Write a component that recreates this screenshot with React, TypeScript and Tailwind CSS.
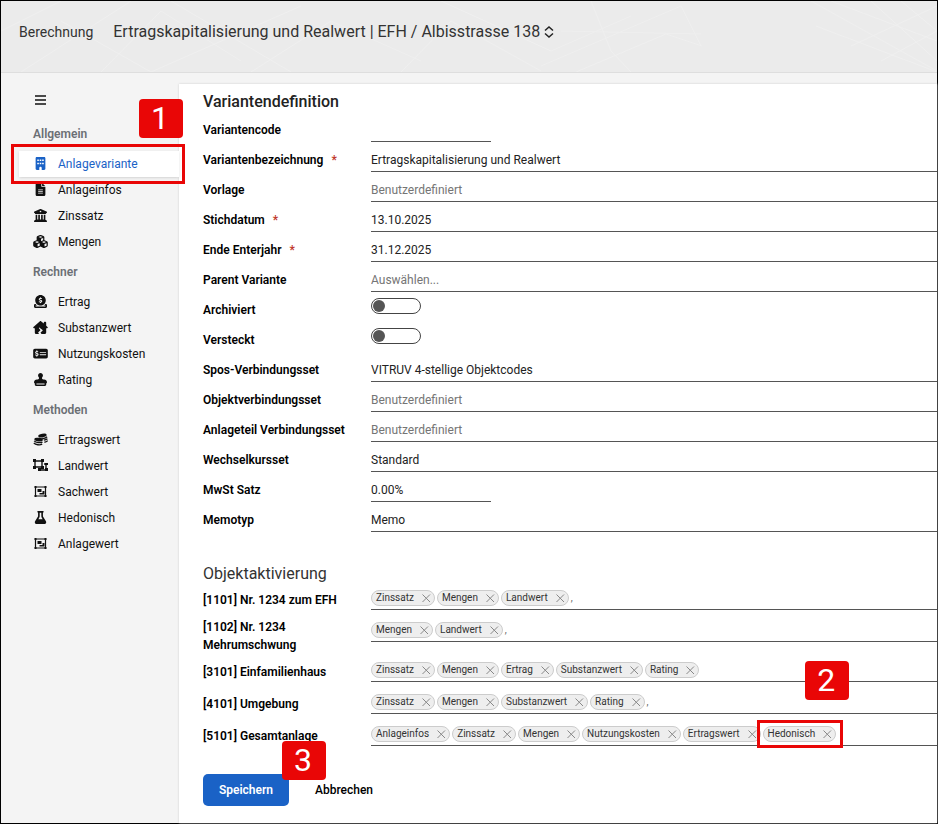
import React, { useState } from "react";
import {
  FaBuilding,
  FaBuildingColumns,
  FaCircleDollarToSlot,
  FaCubes,
  FaFileLines,
  FaFlask,
  FaHouseChimneyCrack,
  FaMoneyCheckDollar,
  FaStamp,
} from "react-icons/fa6";

type IconProps = { className?: string };
type NavItem = {
  label: string;
  icon: React.ComponentType<IconProps>;
  active?: boolean;
};
type NavGroup = { title: string; items: NavItem[] };

const CoinsIcon = ({ className }: IconProps) => (
  <svg className={className} viewBox="0 0 14 13" fill="currentColor" aria-hidden="true">
    <g transform="rotate(-10 9 3)">
      <ellipse cx="9" cy="2.6" rx="4.3" ry="1.8" />
      <path
        d="M5 4.6c2 1.5 6.4 1.5 8.4 0M9.6 7.4c1.5 0 2.8-.3 3.8-.9M9.8 9.5c1.4 0 2.6-.4 3.6-1"
        fill="none"
        stroke="currentColor"
        strokeWidth="1.3"
      />
    </g>
    <g transform="rotate(8 5 7)">
      <ellipse cx="5" cy="6.6" rx="4.3" ry="1.8" />
      <path
        d="M.8 8.5c2 1.5 6.4 1.5 8.4 0M.8 10.6c2 1.6 6.4 1.6 8.4 0"
        fill="none"
        stroke="currentColor"
        strokeWidth="1.3"
      />
    </g>
  </svg>
);

const UngroupIcon = ({ className }: IconProps) => (
  <svg className={className} viewBox="0 0 15 13" fill="currentColor" aria-hidden="true">
    <path
      d="M2 2h7v6H2zM11 5h2v6H7V9"
      fill="none"
      stroke="currentColor"
      strokeWidth="1.4"
    />
    <path d="M0 0h3v3H0zM8 0h3v3H8zM0 7h3v3H0zM8 7h3v3H8zM12 4h3v2h-3zM12 9h3v3h-3zM5 9h3v3H5z" />
  </svg>
);

const GroupIcon = ({ className }: IconProps) => (
  <svg className={className} viewBox="0 0 14 13" fill="currentColor" aria-hidden="true">
    <path d="M2 2h10v9H2z" fill="none" stroke="currentColor" strokeWidth="1.2" />
    <path d="M1 1h2v2H1zM11 1h2v2h-2zM1 10h2v2H1zM11 10h2v2h-2zM4 4h4v3H4zM9 6h2v3.500H6V8h3z" />
  </svg>
);

const navGroups: NavGroup[] = [
  {
    title: "Allgemein",
    items: [
      { label: "Anlagevariante", icon: FaBuilding, active: true },
      { label: "Anlageinfos", icon: FaFileLines },
      { label: "Zinssatz", icon: FaBuildingColumns },
      { label: "Mengen", icon: FaCubes },
    ],
  },
  {
    title: "Rechner",
    items: [
      { label: "Ertrag", icon: FaCircleDollarToSlot },
      { label: "Substanzwert", icon: FaHouseChimneyCrack },
      { label: "Nutzungskosten", icon: FaMoneyCheckDollar },
      { label: "Rating", icon: FaStamp },
    ],
  },
  {
    title: "Methoden",
    items: [
      { label: "Ertragswert", icon: CoinsIcon },
      { label: "Landwert", icon: UngroupIcon },
      { label: "Sachwert", icon: GroupIcon },
      { label: "Hedonisch", icon: FaFlask },
      { label: "Anlagewert", icon: GroupIcon },
    ],
  },
];

type FieldDef = {
  id: string;
  label: string;
  value?: string;
  placeholder?: string;
  required?: boolean;
  short?: boolean;
  toggle?: boolean;
};

const fields: FieldDef[] = [
  { id: "code", label: "Variantencode", short: true },
  {
    id: "bezeichnung",
    label: "Variantenbezeichnung",
    value: "Ertragskapitalisierung und Realwert",
    required: true,
  },
  { id: "vorlage", label: "Vorlage", placeholder: "Benutzerdefiniert" },
  { id: "stichdatum", label: "Stichdatum", value: "13.10.2025", required: true },
  { id: "ende", label: "Ende Enterjahr", value: "31.12.2025", required: true },
  { id: "parent", label: "Parent Variante", placeholder: "Auswählen..." },
  { id: "archiviert", label: "Archiviert", toggle: true },
  { id: "versteckt", label: "Versteckt", toggle: true },
  { id: "spos", label: "Spos-Verbindungsset", value: "VITRUV 4-stellige Objektcodes" },
  { id: "objekt", label: "Objektverbindungsset", placeholder: "Benutzerdefiniert" },
  { id: "anlageteil", label: "Anlageteil Verbindungsset", placeholder: "Benutzerdefiniert" },
  { id: "wechselkurs", label: "Wechselkursset", value: "Standard" },
  { id: "mwst", label: "MwSt Satz", value: "0.00%", short: true },
  { id: "memotyp", label: "Memotyp", value: "Memo" },
];

type ObjectDef = { label: string; tags: string[]; more?: boolean };

const objects: ObjectDef[] = [
  { label: "[1101] Nr. 1234 zum EFH", tags: ["Zinssatz", "Mengen", "Landwert"], more: true },
  { label: "[1102] Nr. 1234 Mehrumschwung", tags: ["Mengen", "Landwert"], more: true },
  {
    label: "[3101] Einfamilienhaus",
    tags: ["Zinssatz", "Mengen", "Ertrag", "Substanzwert", "Rating"],
  },
  {
    label: "[4101] Umgebung",
    tags: ["Zinssatz", "Mengen", "Substanzwert", "Rating"],
    more: true,
  },
  {
    label: "[5101] Gesamtanlage",
    tags: ["Anlageinfos", "Zinssatz", "Mengen", "Nutzungskosten", "Ertragswert", "Hedonisch"],
  },
];

const StepBadge = ({ step, className }: { step: number; className: string }) => (
  <span
    className={`absolute z-20 flex h-[39px] w-11 items-center justify-center rounded bg-[#e90606] pr-[2px] pb-[2px] text-[32px] leading-none font-normal text-white ${className}`}>
    {step}
  </span>
);

const HeaderPattern = () => (
  <svg
    className="absolute inset-0 h-full w-full"
    viewBox="0 0 936 71"
    preserveAspectRatio="none"
    fill="none"
    stroke="#efefef"
    aria-hidden="true">
    <path d="M0 30 60 0M20 71 130 0M60 20l90 51M100 71 160 10l80 50M150 71 300 5M170 0l120 71M250 71 330 20l90 40" />
    <path d="M400 71 450 20l90 50M440 0l110 50 80-35M540 65 680 5M560 30l140 3M575 71l90-38 36 12M680 5l20 40M590 0l20 50 20 21" />
    <path d="M810 0l126 70M830 0l106 40M815 25l121 46M850 45l86-40M870 0l66 60M900 0l36 30M880 60l56-30" />
  </svg>
);

const Sidebar = () => (
  <nav className="w-[178px] shrink-0 pl-[18px]">
    <button aria-label="Menü" className="mt-[9px] mb-[10px] ml-4 flex h-[14px] items-center">
      <svg width="11" height="10" viewBox="0 0 11 10" stroke="#111" strokeWidth="1.5">
        <path d="M0 1h11M0 5h11M0 9h11" />
      </svg>
    </button>
    {navGroups.map((group) => (
      <div key={group.title}>
        <h3 className="flex h-[34px] items-center pl-[14px] text-xs font-semibold text-[#6b6f74]">
          {group.title}
        </h3>
        <ul>
          {group.items.map(({ label, icon: Icon, active }) => (
            <li key={label} className="relative">
              <a
                href="#"
                className={`flex h-[26px] items-center text-xs ${
                  active ? "bg-white text-[#1a62c6] shadow-sm" : "text-[#111]"
                }`}>
                <span className="flex w-[39px] pb-px pl-[14px]">
                  <Icon className="h-[13px] w-[15px]" />
                </span>
                {label}
              </a>
              {active && (
                <>
                  <span className="absolute -inset-y-[7px] -right-[6px] -left-2 z-10 border-[3px] border-[#e90606]" />
                  <StepBadge step={1} className="-top-[52px] -right-1" />
                </>
              )}
            </li>
          ))}
        </ul>
      </div>
    ))}
  </nav>
);

const Toggle = ({ id }: { id: string }) => (
  <input
    id={id}
    type="checkbox"
    role="switch"
    className="h-4 w-[50px] appearance-none rounded-full border border-[#444] bg-white before:m-px before:block before:size-3 before:rounded-full before:bg-[#555] checked:before:ml-[35px]"
  />
);

const FieldRow = ({ field }: { field: FieldDef }) => (
  <div className="flex h-[30px] pt-[6px]">
    <label
      htmlFor={field.id}
      className="flex w-[168px] shrink-0 items-center text-xs font-semibold text-black">
      {field.label}
      {field.required && <span className="ml-2 text-[#c0392b]">*</span>}
    </label>
    {field.toggle ? (
      <Toggle id={field.id} />
    ) : (
      <input
        id={field.id}
        type="text"
        defaultValue={field.value}
        placeholder={field.placeholder}
        className={`h-6 border-b border-[#555] text-xs text-[#222] outline-none placeholder:text-[#757575] ${
          field.short ? "w-[120px]" : "min-w-0 flex-1"
        }`}
      />
    )}
  </div>
);

const Tag = ({ label, onRemove }: { label: string; onRemove: () => void }) => (
  <span className="relative flex h-4 items-center gap-2 rounded-full border border-[#ccc] bg-[#eee] pr-[3px] pl-1 text-[10px] leading-[14px] text-[#333]">
    {label}
    <button aria-label={`${label} entfernen`} onClick={onRemove}>
      <svg width="9" height="9" viewBox="0 0 9 9" stroke="#888">
        <path d="M.5.5l7.500 7.500M8 .5l-7.500 7.500" />
      </svg>
    </button>
    {label === "Hedonisch" && (
      <>
        <span className="pointer-events-none absolute -inset-y-[7px] -right-2 -left-[7px] border-[3px] border-[#e90606]" />
        <StepBadge step={2} className="-top-[66px] -right-[14px]" />
      </>
    )}
  </span>
);

const ObjectRow = ({ label, tags, more }: ObjectDef) => {
  const [items, setItems] = useState(tags);

  return (
    <div className="flex min-h-8">
      <div className="flex w-[168px] shrink-0 items-center py-[2px] pr-4 text-xs leading-[18px] font-semibold text-black">
        {label}
      </div>
      <div className="mt-[6px] flex h-5 min-w-0 flex-1 gap-[2px] border-b border-[#555]">
        {items.map((tag) => (
          <Tag
            key={tag}
            label={tag}
            onRemove={() => setItems(items.filter((item) => item !== tag))}
          />
        ))}
        {more && <span className="text-[10px] leading-4 text-[#666]">,</span>}
      </div>
    </div>
  );
};

const App = () => {
  return (
    <div className="flex min-h-screen flex-col border border-black bg-[#f4f4f4] font-[Roboto,sans-serif]">
      <header className="relative flex h-[72px] items-start border-b border-[#dedede] bg-[#ebebeb] text-[#333]">
        <HeaderPattern />
        <div className="relative flex items-baseline gap-5 pt-[19px] pl-[18px]">
          <span className="text-sm leading-6">Berechnung</span>
          <h1 className="flex items-center gap-1 text-base leading-6">
            Ertragskapitalisierung und Realwert | EFH / Albisstrasse 138
            <svg
              width="10"
              height="12"
              viewBox="0 0 10 12"
              fill="none"
              stroke="#222"
              strokeWidth="1.5"
              aria-hidden="true">
              <path d="M1 4.5 5 1l4 3.5M1 7.5 5 11l4-3.5" />
            </svg>
          </h1>
        </div>
      </header>
      <div className="flex flex-1 pt-[11px]">
        <Sidebar />
        <main className="min-w-0 flex-1 bg-white pt-[6px] pb-[17px] pl-6 shadow-[0_0_2px_#ccc]">
          <form onSubmit={(e) => e.preventDefault()}>
            <h2 className="pt-[2px] text-base leading-5 font-medium text-[#222]">
              Variantendefinition
            </h2>
            {fields.map((field) => (
              <FieldRow key={field.id} field={field} />
            ))}
            <h2 className="mt-[30px] pt-[2px] text-base leading-5 text-[#333]">
              Objektaktivierung
            </h2>
            {objects.map((object) => (
              <ObjectRow key={object.label} {...object} />
            ))}
            <div className="mt-[22px] flex h-8 items-center">
              <div className="relative">
                <button
                  type="submit"
                  className="h-8 w-[86px] rounded-[5px] bg-[#1a62c6] text-xs font-semibold text-white">
                  Speichern
                </button>
                <StepBadge step={3} className="-top-[33px] -right-[37px]" />
              </div>
              <button type="button" className="ml-[26px] text-xs font-medium text-black">
                Abbrechen
              </button>
            </div>
          </form>
        </main>
      </div>
    </div>
  );
};

export default App;
